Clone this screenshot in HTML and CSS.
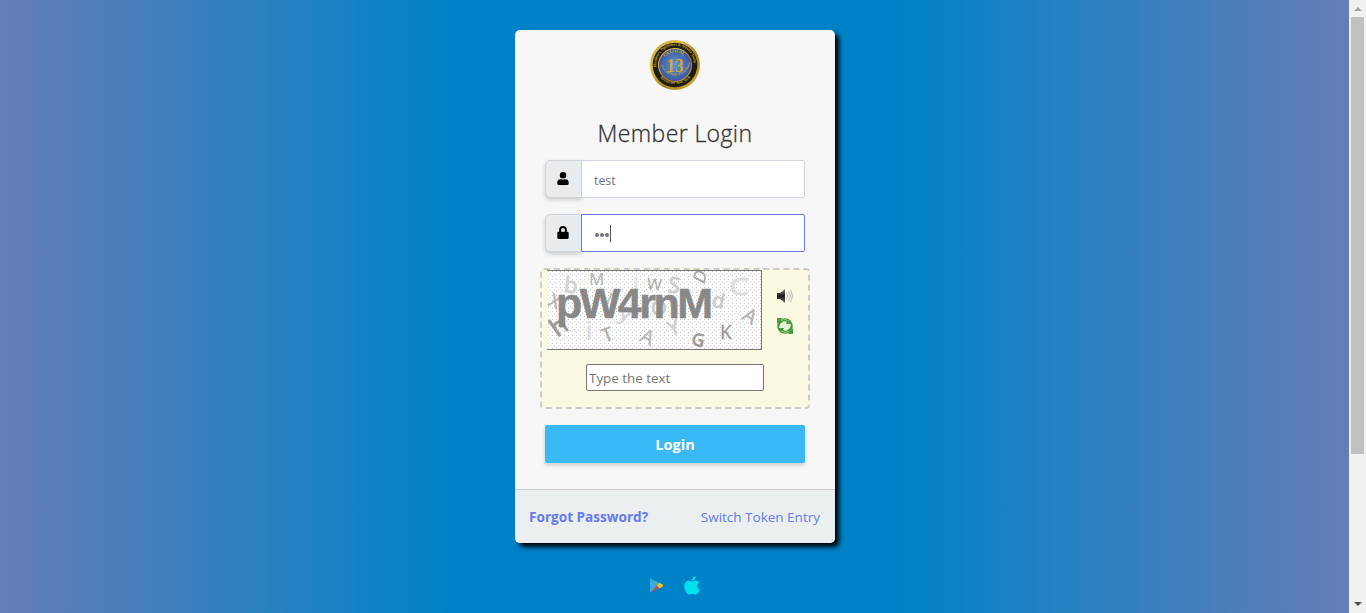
FILE: index.html
```html
<!DOCTYPE html>
<html lang="en">
<head>
<meta charset="utf-8">
<title>Member Login</title>
<link rel="stylesheet" href="styles.css">
</head>
<body>
<main class="page">
  <section class="card">
    <div class="card-body">
      <svg class="seal" viewBox="0 0 50 50">
        <defs>
          <linearGradient id="gold" x1="0" y1="0" x2="1" y2="1"><stop offset="0" stop-color="#c99a1e"/><stop offset=".3" stop-color="#e0be48"/><stop offset=".6" stop-color="#a87f17"/><stop offset="1" stop-color="#d9b437"/></linearGradient>
          <radialGradient id="blue"><stop offset="0" stop-color="#5f9bcc"/><stop offset="1" stop-color="#3c55a4"/></radialGradient>
          <path id="top" d="M6.500 27A18.700 18.700 0 1 1 43.500 27"/>
          <path id="bottom" d="M9.500 37A20.500 20.500 0 0 0 40.500 37"/>
          <path id="local" d="M13.500 20A12.500 12.500 0 0 1 36.500 20"/>
          <path id="lower" d="M10 23A15.300 15.300 0 0 0 40 23"/>
        </defs>
        <circle cx="25" cy="25" r="25" fill="url(#gold)"/>
        <circle cx="25" cy="25" r="22.300" fill="#1d1c16"/>
        <circle cx="25" cy="25" r="17" fill="url(#gold)"/>
        <circle cx="25" cy="25" r="16" fill="url(#blue)"/>
        <g class="seal-text">
          <text font-size="4"><textPath href="#top" textLength="60">Plumbers, Pipefitters &amp; Service Techs</textPath></text>
          <text font-size="3.800"><textPath href="#bottom" startOffset="1" textLength="34">Rochester New York</textPath></text>
          <text font-size="4.600"><textPath href="#local" startOffset="3" textLength="21">UA LOCAL</textPath></text>
          <text font-size="3.200"><textPath href="#lower" startOffset="2" textLength="40">Over 100 Years of Excellence</textPath></text>
          <text x="16.500" y="32" font-size="19.500" textLength="17" lengthAdjust="spacingAndGlyphs">13</text>
        </g>
      </svg>
      <h1 class="title">Member Login</h1>
      <div class="field">
        <span class="addon"><svg class="icon" viewBox="0 0 448 512"><path d="M224 256a128 128 0 1 0 0-256 128 128 0 0 0 0 256zm90 32h-17a174 174 0 0 1-146 0h-17A134 134 0 0 0 0 422v42c0 27 21 48 48 48h352c27 0 48-21 48-48v-42a134 134 0 0 0-134-134z"/></svg></span>
        <div class="control">test</div>
      </div>
      <div class="field">
        <span class="addon"><svg class="icon" viewBox="0 0 448 512"><path d="M400 224h-24v-72a152 152 0 0 0-304 0v72H48c-27 0-48 21-48 48v192c0 27 21 48 48 48h352c27 0 48-21 48-48V272c0-27-21-48-48-48zm-104 0H152v-72a72 72 0 0 1 144 0z"/></svg></span>
        <div class="control focused"><span class="dots"><i></i><i></i><i></i></span><span class="caret"></span></div>
      </div>
      <div class="captcha">
        <div class="challenge">
          <svg class="captcha-image" viewBox="0 0 215 80">
            <defs><pattern id="specks" width="8" height="8" patternUnits="userSpaceOnUse"><path fill="#c6c6c6" d="M1 1h1v1h-1zM5 1h1v1h-1zM3 3h1v1h-1zM7 4h1v1h-1zM1 5h1v1h-1zM5 6h1v1h-1z"/></pattern></defs>
            <rect width="215" height="80" fill="#fff"/>
            <rect width="215" height="80" fill="url(#specks)"/>
            <g class="letters">
              <text class="wide" x="17" y="23" font-size="22" fill="#d3d3d3" stroke="#d3d3d3" transform="rotate(7 24 16)">b</text>
              <text x="42" y="14.500" font-size="17" fill="#b5b5b5">M</text>
              <text class="wide" x="86" y="23" font-size="22" fill="#e2e2e2" stroke="#e2e2e2">i</text>
              <text x="100" y="20" font-size="16" fill="#aaa" transform="rotate(5 108 15)">W</text>
              <text class="wide" x="121" y="23" font-size="22" fill="#cfcfcf" stroke="#cfcfcf" transform="rotate(8 128 15)">S</text>
              <text x="0" y="0" font-size="17" fill="#a5a5a5" stroke="#a5a5a5" transform="translate(157 15) rotate(-75) skewX(-12)" >D</text>
              <text class="wide" x="182" y="25" font-size="24" fill="#ddd" stroke="#ddd" textLength="20" lengthAdjust="spacingAndGlyphs">C</text>
              <text x="2" y="38" font-size="19" fill="#b4b4b4" stroke="#b4b4b4" transform="rotate(25 8 32)">X</text>
              <text x="58" y="37" font-size="20" fill="#c2c2c2" transform="rotate(25 62 31)">I</text>
              <text class="wide" x="72" y="51" font-size="21" fill="#d7d7d7" stroke="#d7d7d7" transform="rotate(20 79 47)">y</text>
              <text class="wide" x="104" y="45" font-size="20" fill="#c9c9c9" stroke="#c9c9c9">O</text>
              <text class="wide" x="165" y="38" font-size="20" fill="#ccc" stroke="#ccc" transform="rotate(12 173 32)">d</text>
              <text x="196" y="53" font-size="20" fill="#b4b4b4" stroke="#b4b4b4" transform="rotate(32 203 47)">A</text>
              <text class="wide" x="4" y="64" font-size="25" fill="#999" stroke="#999" transform="rotate(-35 13 56)">h</text>
              <text class="wide" x="39" y="69" font-size="24" fill="#ddd" stroke="#ddd">i</text>
              <text x="55" y="71" font-size="19" fill="#aaa" stroke="#aaa" transform="rotate(-20 61 64)">T</text>
              <text x="94" y="74" font-size="20" fill="#b8b8b8" stroke="#b8b8b8" transform="rotate(25 101 67)">A</text>
              <text class="wide" x="121" y="64" font-size="20" fill="#d0d0d0" stroke="#d0d0d0" transform="rotate(-20 128 57)">Y</text>
              <text class="wide" x="145" y="76" font-size="17" fill="#999" stroke="#999" transform="rotate(8 151 70)">G</text>
              <text x="173" y="69" font-size="19" fill="#999" stroke="#999">K</text>
              <text class="word" x="9" y="48" textLength="157">pW4rnM</text>
            </g>
            <path d="M0 .5H214.500V79.500H0" fill="none" stroke="#777"/>
          </svg>
          <div class="tools">
            <svg class="tool" viewBox="0 0 16 16"><defs><linearGradient id="metal" y2="1" x2="0"><stop stop-color="#888"/><stop offset=".5" stop-color="#171717"/><stop offset="1" stop-color="#777"/></linearGradient></defs><path fill="url(#metal)" d="M0 5h3l5-4v14l-5-4H0z"/><path fill="none" stroke="#c4c3b5" stroke-width="1.200" d="M9.500 5.500q2 2.500 0 5M11.500 3.500q3.500 4.500 0 9M13.300 2q4 6 0 12"/></svg>
            <svg class="tool" viewBox="0 0 16 16"><circle cx="8" cy="8" r="7.800" fill="#459a3c"/><path fill="#459a3c" d="M0 0h5L0 6zM16 16h-5l5-6z"/><path fill="#e7f1d8" d="M3 6l4-3 3 1-1 2 5 0-1 4-4 3-3-1 1-2-5 0z"/><path fill="none" stroke="#8cc47f" d="M4 2.500q4-2.500 8 .5M4 13q4 2.500 8 .5"/></svg>
          </div>
        </div>
        <input class="captcha-input" type="text" placeholder="Type the text">
      </div>
      <button class="login" type="button"><span>Login</span></button>
    </div>
    <footer class="card-footer">
      <a class="forgot">Forgot Password?</a>
      <a class="switch">Switch Token Entry</a>
    </footer>
  </section>
  <div class="stores">
    <svg class="play" viewBox="0 0 14 16"><path fill="#38a9e4" d="M0 0v16l7.500-8z"/><path fill="#38bdb1" d="M0 0l7.500 8L10 5.500z"/><path fill="#df443c" d="M0 16l7.500-8L10 10.500z"/><path fill="#f8c515" d="M7.500 8L10 5l3.500 2q1 1 0 2L10 11z"/></svg>
    <svg class="apple" viewBox="0 0 384 512"><path fill="#00e1f0" d="M319 269c0-37 16-64 50-85-19-27-47-42-85-45-36-3-75 21-89 21-15 0-49-20-76-20C63 141 4 185 4 274q0 39 15 82c13 37 59 127 107 125 25-1 43-18 76-18 32 0 48 18 76 18 49-1 90-82 103-119-65-31-62-90-62-93zM262 105c27-33 25-62 24-73-24 2-52 17-68 35-17 20-28 45-25 72 26 2 50-11 69-34z"/></svg>
  </div>
</main>
<aside class="scrollbar"><span class="arrow up"></span><span class="thumb"></span><span class="arrow down"></span></aside>
</body>
</html>
```
FILE: styles.css
```css
* { box-sizing: border-box; }
body { margin: 0; height: 613px; display: flex; overflow: hidden; font-family: "Open Sans", "Noto Sans", sans-serif; }
.page { width: 1349px; padding-top: 30px; display: flex; flex-direction: column; align-items: center; background: linear-gradient(to right, #667db6, #0082c8, #0082c8, #667db6); }
.card { width: 320px; height: 513px; margin-left: 1px; display: flex; flex-direction: column; flex-shrink: 0; border-radius: 5px; background: #f7f7f7; box-shadow: 4px 4px 5px #000; }
.card-body { height: 459px; padding: 10px 30px 0; display: flex; flex-direction: column; align-items: center; }
.seal { width: 50px; height: 50px; flex-shrink: 0; }
.seal-text { fill: #d0a82f; font-family: "Liberation Serif", serif; font-weight: bold; }
.title { margin: 26px 0 9px; height: 35px; font-size: 23px; line-height: 35px; font-weight: 350; color: #333; letter-spacing: .4px; -webkit-text-stroke: .3px #333; white-space: nowrap; }
.field { width: 260px; height: 38px; margin-bottom: 16px; display: flex; flex-shrink: 0; }
.addon { width: 37px; margin-right: -1px; padding: 11px 2px 0 0; display: flex; justify-content: center; border: 1px solid #ced4da; border-radius: 5px 0 0 5px; background: #e9ecef; box-shadow: 0 2px 4px rgba(0,0,0,.18); }
.icon { width: 12px; height: 13px; }
.control { flex: 1; position: relative; display: flex; align-items: center; padding: 3px 12px 0; border: 1px solid #d1d1e3; border-radius: 0 2px 2px 0; background: #fff; color: #6e707e; font-size: 12.3px; }
.focused { border-color: #667be8; }
.dots { display: flex; gap: 1px; padding: 0 0 0 1px; }
.dots i { width: 4px; height: 4px; border-radius: 50%; background: #6e707e; }
.caret { width: 1px; height: 17px; margin: 0 0 2px 1px; background: #555; }
.captcha { width: 270px; height: 141px; flex-shrink: 0; border: 2px dashed #ccc; border-radius: 4px; background: #fbf9e2; display: flex; flex-direction: column; align-items: center; gap: 14px; }
.challenge { width: 100%; display: flex; padding-left: 5px; }
.captcha-image { width: 215px; height: 80px; }
.letters { font-family: "Noto Sans", sans-serif; stroke-width: .3; }
.wide { stroke-width: .8; }
.word { font-family: "Liberation Sans", sans-serif; font-size: 43px; font-weight: bold; fill: #888; stroke: #888; stroke-width: .5; }
.tools { display: flex; flex-direction: column; gap: 14px; padding: 18px 0 0 15px; }
.tool { width: 16px; height: 16px; }
.captcha-input { width: 178px; height: 27px; padding: 1px 2px; border: 1px solid #767676; border-radius: 2px; font: 13.4px "Open Sans", sans-serif; background: #fff; }
.captcha-input::placeholder { color: #757575; }
.login { width: 260px; height: 38px; margin-top: 16px; padding: 0; flex-shrink: 0; border: 0; border-radius: 2px; background: #39b9f5; box-shadow: 0 2px 4px rgba(0,0,0,.18); color: #fff; font: 700 14.6px "Open Sans", sans-serif; }
.card-footer { height: 54px; padding: 0 15px 0 14px; display: flex; align-items: center; justify-content: space-between; border-top: 1px solid #ccc; border-radius: 0 0 5px 5px; background: #ebeff0; color: #667bee; font-size: 13.5px; white-space: nowrap; }
.forgot { font-weight: 700; font-size: 13.6px; }
.stores { display: flex; align-items: center; gap: 20px; margin-top: 32px; }
.play { width: 15px; height: 15px; }
.apple { width: 16px; height: 21px; }
.scrollbar { width: 17px; display: flex; flex-direction: column; align-items: center; background: #f1f1f1; }
.arrow { border: 4px solid transparent; border-top: 0; border-bottom: 4px solid #a3a3a3; }
.up { margin: 7px 0 6px; }
.thumb { width: 13px; height: 437px; background: #c1c1c1; }
.down { margin-top: 148px; border-top: 4px solid #505050; border-bottom: 0; }
```
